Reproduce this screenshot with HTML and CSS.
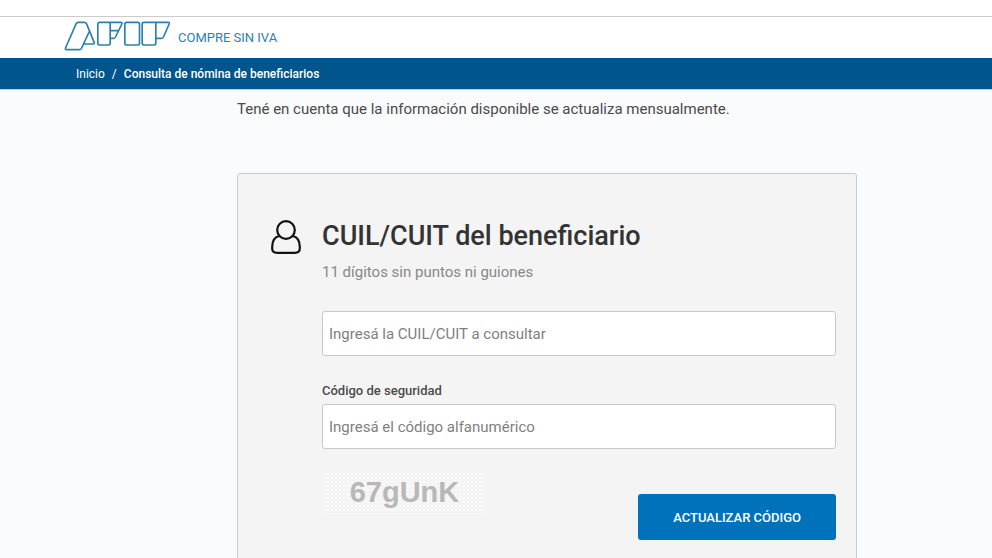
FILE: index.html
```html
<!DOCTYPE html>
<html lang="es">

<head>
    <meta charset="utf-8">
    <meta name="viewport" content="width=device-width, initial-scale=1.0">
    <title>AFIP - Compre sin IVA</title>
    <link rel="stylesheet" href="styles.css">
</head>

<body>
    <header>
        <div class="marca">
            <svg class="logo" viewBox="42 38 320 90" role="img" aria-label="AFIP">
                <path d="M118 68 L94 120 Q92 124 88 124 H50 Q44 124 46 119 L78 46 Q80 42 84 42 H103 Q107 42 109 46 L132 102 Q134 107 129 107 H101" />
                <path d="M180 42 H148 Q143 42 143 47 V105 Q143 110 148 110 H175 Q180 110 180 105 Z H212 Q217 42 215 47 L196 86 Q194 90 190 90 H180 M180 67 H205" />
                <rect x="224" y="42" width="44" height="68" rx="5" />
                <path d="M317 42 H281 Q276 42 276 47 V105 Q276 110 281 110 H312 Q317 110 317 105 Z H354 Q359 42 357 47 L340 86 Q338 90 334 90 H317" />
            </svg>
            <span class="servicio">COMPRE SIN IVA</span>
        </div>
        <nav class="migas">
            <a href="#">Inicio</a>
            <span>/</span>
            <strong>Consulta de nómina de beneficiarios</strong>
        </nav>
    </header>

    <main>
        <p class="aviso">Tené en cuenta que la información disponible se actualiza mensualmente.</p>

        <form class="panel">
            <svg class="persona" viewBox="0 0 30 35" aria-hidden="true">
                <circle cx="15" cy="10" r="8.8" />
                <path d="M8.5 16 C3.5 17 1.2 21 1.2 27 V28.5 Q1.2 32.8 6.2 32.8 H23.8 Q28.8 32.8 28.8 28.5 V27 C28.8 21 26.5 17 21.5 16" />
            </svg>
            <div class="campos">
                <h1><label for="cuit">CUIL/CUIT del beneficiario</label></h1>
                <p class="ayuda" id="ayuda">11 dígitos sin puntos ni guiones</p>
                <input type="text" id="cuit" aria-describedby="ayuda" placeholder="Ingresá la CUIL/CUIT a consultar">

                <label class="etiqueta" for="codigo">Código de seguridad</label>
                <input type="text" id="codigo" placeholder="Ingresá el código alfanumérico">

                <div class="seguridad">
                    <div class="captcha">67gUnK</div>
                    <button type="button">ACTUALIZAR CÓDIGO</button>
                </div>
            </div>
        </form>
    </main>
</body>

</html>
```
FILE: styles.css
```css
* {
    box-sizing: border-box;
}

body {
    margin: 0;
    font-family: Roboto, sans-serif;
    font-size: 15px;
    color: #4a4a4a;
    background-color: #fafbfd;
}

header {
    padding-top: 16px;
    background-color: #fff;
}

.marca {
    display: flex;
    align-items: center;
    gap: 7px;
    height: 42px;
    padding-left: 64px;
    border-top: 1px solid #ccc;
}

.logo {
    width: 107px;
    height: 30px;
    margin-bottom: 4px;
    fill: none;
    stroke: #2a80b0;
    stroke-width: 5;
    stroke-linejoin: round;
}

.servicio {
    font-size: 13px;
    color: #2a7fb8;
}

.migas {
    display: flex;
    align-items: center;
    gap: 7px;
    height: 32px;
    padding-left: 76px;
    font-size: 12px;
    color: #fff;
    background-color: #00558c;
    border-bottom: 1px solid #b5d3e3;
}

.migas a {
    color: #fff;
    text-decoration: none;
}

.migas strong {
    font-weight: 500;
}

main {
    padding: 8px 135px 0 237px;
}

.aviso {
    margin: 0 0 53px;
    font-size: 15px;
    line-height: 22px;
}

.panel {
    display: flex;
    align-items: flex-start;
    gap: 21px;
    padding: 40px 20px;
    background-color: #f4f4f4;
    border: 1px solid #c8ccd0;
    border-radius: 3px;
}

.persona {
    flex: none;
    width: 30px;
    height: 35px;
    margin: 6px 0 0 13px;
    fill: none;
    stroke: #111;
    stroke-width: 2.2;
}

.campos {
    flex: 1;
}

h1 {
    margin: 0;
    font-size: 27px;
    font-weight: 500;
    line-height: 44px;
    color: #333;
}

.ayuda {
    margin: 3px 0 28px;
    line-height: 22px;
    color: #888;
}

input {
    display: block;
    width: 100%;
    height: 45px;
    padding: 0 6px;
    font-family: inherit;
    font-size: 15px;
    color: #4a4a4a;
    background-color: #fff;
    border: 1px solid #c8c8c8;
    border-radius: 3px;
}

input::placeholder {
    color: #808080;
}

.etiqueta {
    display: block;
    margin: 25px 0 3px;
    font-size: 13px;
    font-weight: 500;
    line-height: 20px;
}

.seguridad {
    display: flex;
    justify-content: space-between;
    align-items: flex-start;
    margin-top: 23px;
}

.captcha {
    width: 165px;
    height: 42px;
    font-family: "Liberation Sans", Arial, sans-serif;
    font-size: 29px;
    font-weight: bold;
    line-height: 40px;
    text-align: center;
    color: #b8b8b8;
    background-color: #f4f4f4;
    background-image: radial-gradient(#fafafa 1px, transparent 1px);
    background-size: 4px 4px;
}

button {
    height: 46px;
    margin-top: 22px;
    padding: 0 35px;
    font-family: inherit;
    font-size: 13px;
    font-weight: 500;
    color: #fff;
    background-color: #0072bc;
    border: none;
    border-radius: 3px;
}
```
